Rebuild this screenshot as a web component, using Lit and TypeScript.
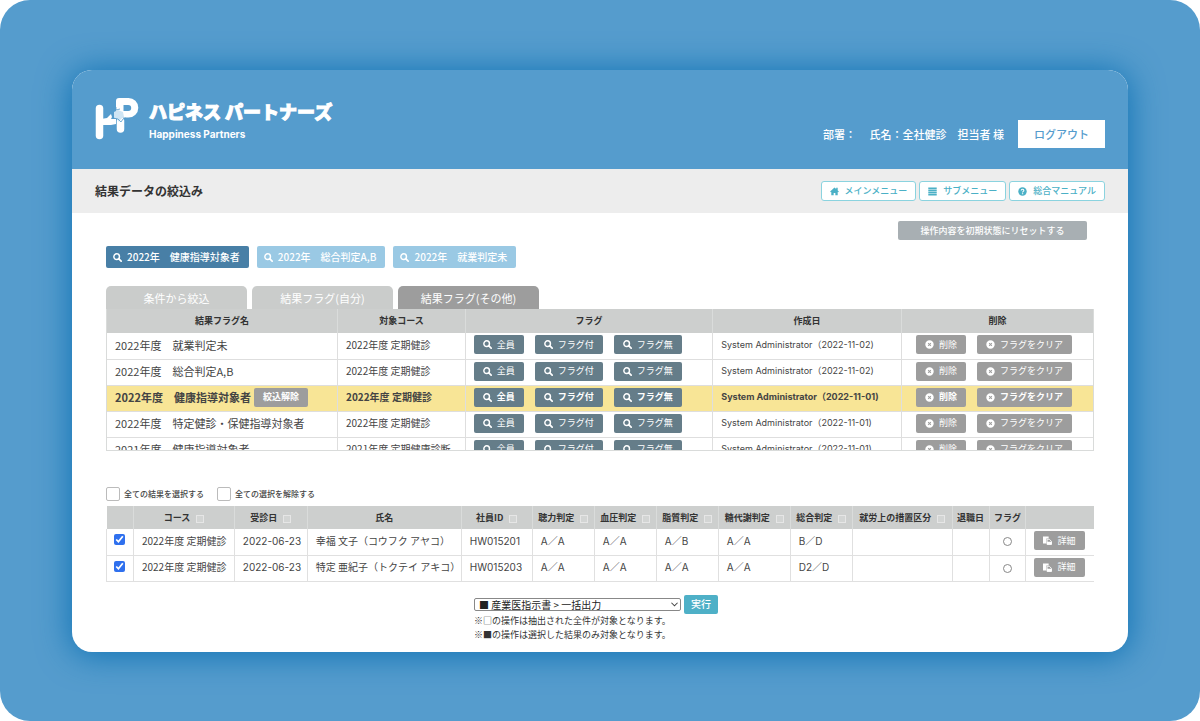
import { LitElement, html, css, svg } from "lit";
import { customElement } from "lit/decorators.js";
import { classMap } from "lit/directives/class-map.js";

const icon = (name: string) => {
  const shapes: Record<string, unknown> = {
    search: svg`<circle cx="6.5" cy="6.5" r="5" fill="none" stroke="currentColor" stroke-width="2.6"/><path d="M10.500 10.500l4 4" stroke="currentColor" stroke-width="3" stroke-linecap="round"/>`,
    home: svg`<path fill="currentColor" d="M8 1l7.800 7-1.300 1.400L13.700 8.700V14.800H9.500V10.500H6.500v4.300H2.300V8.700L1.500 9.400.2 8zM11 1.500h2.700v4.500L11 3.500z"/>`,
    list: svg`<path fill="currentColor" d="M.5 1h15v2.800H.5zM.5 4.700h15v2.800H.5zM.5 8.400h15v2.800H.5zM.5 12.100h15v2.800H.5z"/>`,
    help: svg`<circle cx="8" cy="8" r="7.500" fill="currentColor"/><path d="M5.700 6.200c0-3.200 4.700-3 4.700-.2 0 1.800-2.300 1.600-2.300 3.600" fill="none" stroke="#fff" stroke-width="1.900"/><path fill="#fff" d="M7 10.900h2.200v2H7z"/>`,
    close: svg`<path fill="currentColor" fill-rule="evenodd" d="M8 .5a7.500 7.500 0 1 0 0 15 7.500 7.500 0 0 0 0-15zM6.100 4.900L8 6.800l1.900-1.900 1.200 1.200L9.200 8l1.900 1.900-1.200 1.200L8 9.200l-1.900 1.900-1.200-1.200L6.800 8 4.900 6.100z"/>`,
    paste: svg`<path fill="currentColor" d="M0 1h10v3.500H6v9H0z"/><path fill="none" stroke="currentColor" stroke-width="1.600" d="M7.300 5.800h4l3.700 3.700v5.500H7.300z"/><path fill="currentColor" d="M7 10h8.500v5H7z"/>`,
  };
  return html`<svg class="icon" viewBox="0 0 16 16" aria-hidden="true">${shapes[name]}</svg>`;
};

interface FlagRow {
  name: string;
  course: string;
  created: string;
  active?: boolean;
}

const FLAGS: FlagRow[] = [
  { name: "2022年度　就業判定未", course: "2022年度 定期健診", created: "2022-11-02" },
  { name: "2022年度　総合判定A,B", course: "2022年度 定期健診", created: "2022-11-02" },
  { name: "2022年度　健康指導対象者", course: "2022年度 定期健診", created: "2022-11-01", active: true },
  { name: "2022年度　特定健診・保健指導対象者", course: "2022年度 定期健診", created: "2022-11-01" },
  { name: "2021年度　健康指導対象者", course: "2021年度 定期健康診断", created: "2022-11-01" },
];

const COLUMNS = [
  { label: "", width: 27 },
  { label: "コース", width: 101, sort: true },
  { label: "受診日", width: 73, sort: true },
  { label: "氏名", width: 154 },
  { label: "社員ID", width: 71, sort: true },
  { label: "聴力判定", width: 62, sort: true },
  { label: "血圧判定", width: 62, sort: true },
  { label: "脂質判定", width: 62, sort: true },
  { label: "糖代謝判定", width: 72, sort: true },
  { label: "総合判定", width: 62, sort: true },
  { label: "就労上の措置区分", width: 100, sort: true },
  { label: "退職日", width: 37 },
  { label: "フラグ", width: 37 },
  { label: "", width: 68 },
];

const PEOPLE = [
  { name: "幸福 文子（コウフク アヤコ）", id: "HW015201", results: ["A／A", "A／A", "A／B", "A／A", "B／D"] },
  { name: "特定 亜紀子（トクテイ アキコ）", id: "HW015203", results: ["A／A", "A／A", "A／A", "A／A", "D2／D"] },
];

@customElement("app-root")
export class AppRoot extends LitElement {
  static styles = css`
    :host {
      display: block;
      background: #fff;
      color: #444;
      font: 10px/14px "Noto Sans CJK JP", sans-serif;
    }
    * { box-sizing: border-box; }
    button, select, input { font: inherit; margin: 0; }
    button { border: 0; padding: 0; cursor: pointer; white-space: nowrap; }
    h1, h2, p { margin: 0; }
    .stage { min-height: 100vh; padding: 70px 6% 69px; border-radius: 30px; background: #559ccd; display: flex; flex-direction: column; }
    .panel { flex: 1; border-radius: 20px; overflow: hidden; background: #fff; }
    .shadow { flex: 1; display: flex; flex-direction: column; border-radius: 20px; box-shadow: 0 2px 32px 2px #1274b5; }
    .head { display: flex; justify-content: space-between; height: 99px; padding: 0 23px; background: #559ccd; color: #fff; }
    .brand { display: flex; gap: 10px; padding-top: 27px; }
    .logo { width: 44px; height: 44px; }
    .brandname { font-size: 18px; line-height: 28px; font-weight: 900; -webkit-text-stroke: 1px #fff; }
    .tagline { font: 700 10px/18px Inter, sans-serif; }
    .user { display: flex; align-items: center; align-self: flex-start; gap: 14px; padding-top: 50px; font-size: 11px; font-weight: 500; white-space: pre; }
    .logout { width: 87px; height: 28px; background: #fff; color: #559ccd; font-weight: 500; }
    .bar { display: flex; align-items: center; justify-content: space-between; height: 44px; padding: 0 23px; background: #ededed; }
    .title { font-size: 12px; font-weight: 700; color: #333; }
    .nav { display: flex; gap: 3px; }
    .nav a { display: flex; align-items: center; gap: 6px; height: 20px; padding: 0 8px; border: 1px solid #8bd3df; border-radius: 3px; background: #fff; color: #4bb0c6; font-size: 9px; font-weight: 500; text-decoration: none; white-space: nowrap; }
    .icon { width: 9px; height: 9px; flex: none; display: block; }
    .body { padding: 8px 34px 6px; }
    .resetline { display: flex; justify-content: flex-end; padding-right: 7px; }
    .reset { width: 189px; height: 19px; border-radius: 2px; background: #a8afb3; color: #fff; font-size: 9px; font-weight: 500; }
    .saved { display: flex; gap: 8px; margin-top: 6px; }
    .saved button { display: flex; align-items: center; gap: 5px; height: 22px; padding: 0 9px 0 7px; border-radius: 2px; background: #9ac9e4; color: #fff; font-weight: 500; }
    .saved .on { background: #487fa6; }
    .tabs { display: flex; gap: 5px; margin-top: 18px; }
    .tabs button { width: 141px; height: 23px; border-radius: 5px 5px 0 0; background: #cacccb; color: #fff; font-size: 11px; }
    .tabs .on { background: #9d9d9d; }
    .scroll { height: 142px; overflow: hidden; border: 1px solid #d9dbda; border-top: 0; }
    table { width: 100%; border-collapse: collapse; table-layout: fixed; }
    th { height: 24px; padding: 0; background: #cdcfce; color: #333; font-size: 9px; font-weight: 700; white-space: nowrap; border-left: 1px solid #dadcdb; }
    td { height: 26px; padding: 0 0 2px 8px; border-left: 1px solid #dedede; border-bottom: 1px solid #dedede; white-space: nowrap; }
    th:first-child, td:first-child { border-left: 0; }
    .name { font-size: 11px; }
    .inner { display: flex; align-items: center; gap: 3px; }
    .created { font: 9px/14px Inter, "Noto Sans CJK JP", sans-serif; }
    .latin { font-family: Inter, "Noto Sans CJK JP", sans-serif; }
    .active td { background: #f8e596; font-weight: 700; }
    .ops { display: flex; gap: 11px; }
    .del { padding-left: 6px; }
    .small { display: flex; align-items: center; justify-content: center; gap: 5px; height: 19px; border-radius: 2px; background: #9d9d9d; color: #fff; font-size: 9px; font-weight: inherit; padding: 0 9px; }
    .slate { background: #657d89; }
    .picks { display: flex; gap: 13px; margin-top: 36px; }
    .picks label { display: flex; align-items: center; gap: 4px; font-size: 8px; font-weight: 500; }
    .box { appearance: none; width: 14px; height: 14px; border: 1px solid #bbb; border-radius: 2px; background: #fff; }
    .people { margin-top: 5px; }
    .people th { height: 23px; }
    .people td { border-color: #e0e0e0; }
    .people td:first-child { border-left: 1px solid #e0e0e0; }
    .sort { display: inline-block; width: 8px; height: 8px; margin-left: 6px; border: 1px solid #e6e6e6; background: #d3d5d4; vertical-align: -1px; padding: 0; }
    .people .tick { padding: 0 0 4px; text-align: center; }
    .tick input { display: block; width: 11px; height: 11px; margin: 0 auto; accent-color: #2f70ee; }
    .people .mark { padding: 0; text-align: center; }
    .ring { display: block; width: 9px; height: 9px; margin: 0 auto; border: 1px solid #888; border-radius: 50%; }
    .run { display: flex; flex-direction: column; width: 252px; margin: 13px auto 0; }
    .runline { display: flex; align-items: center; gap: 3px; }
    .pick { appearance: none; width: 100%; height: 13px; padding: 0 4px; border: 1px solid #888; border-radius: 2px; background: #fff; color: #222; line-height: 11px; }
    .pickwrap { display: grid; width: 207px; align-items: center; }
    .pick, .chev { grid-area: 1 / 1; }
    .chev { justify-self: end; width: 7px; height: 7px; margin-right: 3px; pointer-events: none; }
    .exec { width: 34px; height: 19px; border-radius: 2px; background: #4eb0c7; color: #fff; font-weight: 500; }
    .notes { font-size: 9px; white-space: nowrap; color: #333; }
  `;

  private flagButton(label: string, glyph: string, slate = false) {
    return html`<button class=${classMap({ small: true, slate })}>${icon(glyph)}<span>${label}</span></button>`;
  }

  private flagRow(row: FlagRow) {
    return html`<tr class=${classMap({ active: !!row.active })}>
      <td class="name"><div class="inner"><span>${row.name}</span>${row.active ? html`<button class="small">絞込解除</button>` : ""}</div></td>
      <td>${row.course}</td>
      <td><div class="ops">${this.flagButton("全員", "search", true)}${this.flagButton("フラグ付", "search", true)}${this.flagButton("フラグ無", "search", true)}</div></td>
      <td class="created">System Administrator（${row.created})</td>
      <td><div class="ops del">${this.flagButton("削除", "close")}${this.flagButton("フラグをクリア", "close")}</div></td>
    </tr>`;
  }

  render() {
    return html`<div class="stage"><div class="shadow"><main class="panel">
      <header class="head">
        <div class="brand">
          <svg class="logo" viewBox="0 0 44 44" aria-hidden="true">
            <g fill="none" stroke="#fff" stroke-width="7.500" stroke-linecap="round" stroke-linejoin="round">
              <path d="M4.500 11.500v27"/><path d="M25.500 32V24"/>
            </g>
            <path fill="#fff" fill-rule="evenodd" d="M24 1h9.500a9.800 9.800 0 0 1 0 19.600H21V4a3 3 0 0 1 3-3zM28.500 8v6h4.700a3 3 0 0 0 0-6z"/>
            <path fill="#fff" d="M6 22l6-1 4-4 1 3-1 2h5v5l-5 1H6z"/>
            <path fill="#cfe5f4" d="M19 15l4-2 5 2 1 5-3 2-2 3-2-3-3-1z"/>
            <path fill="none" stroke="#559ccd" stroke-width=".8" d="M18 21l5 1 3 3 2-3 3-1M21 10v3l4-1"/>
          </svg>
          <div><h1 class="brandname">ハピネス パートナーズ</h1><p class="tagline">Happiness Partners</p></div>
        </div>
        <div class="user"><span>部署：　 氏名：全社健診　担当者 様</span><button class="logout">ログアウト</button></div>
      </header>
      <div class="bar">
        <h2 class="title">結果データの絞込み</h2>
        <nav class="nav"><a href="#main">${icon("home")}メインメニュー</a><a href="#sub">${icon("list")}サブメニュー</a><a href="#manual">${icon("help")}総合マニュアル</a></nav>
      </div>
      <div class="body">
        <div class="resetline"><button class="reset">操作内容を初期状態にリセットする</button></div>
        <div class="saved">
          <button class="on">${icon("search")}<span>2022年　健康指導対象者</span></button>
          <button>${icon("search")}<span>2022年　総合判定A,B</span></button>
          <button>${icon("search")}<span>2022年　就業判定未</span></button>
        </div>
        <div class="tabs"><button>条件から絞込</button><button>結果フラグ(自分)</button><button class="on">結果フラグ(その他)</button></div>
        <div class="scroll"><table>
          <colgroup>${[231, 128, 248, 189, 192].map((w) => html`<col style="width:${(w / 9.88).toFixed(2)}%">`)}</colgroup>
          <thead><tr>${["結果フラグ名", "対象コース", "フラグ", "作成日", "削除"].map((t) => html`<th>${t}</th>`)}</tr></thead>
          <tbody>${FLAGS.map((r) => this.flagRow(r))}</tbody>
        </table></div>
        <div class="picks">
          <label><input class="box" type="checkbox">全ての結果を選択する</label>
          <label><input class="box" type="checkbox">全ての選択を解除する</label>
        </div>
        <table class="people">
          <colgroup>${COLUMNS.map((c) => html`<col style="width:${(c.width / 9.88).toFixed(2)}%">`)}</colgroup>
          <thead><tr>${COLUMNS.map((c) => html`<th>${c.label}${c.sort ? html`<button class="sort" aria-label="並べ替え"></button>` : ""}</th>`)}</tr></thead>
          <tbody>${PEOPLE.map((p) => html`<tr>
            <td class="tick"><input type="checkbox" checked aria-label=${p.name}></td>
            <td>2022年度 定期健診</td><td class="latin">2022-06-23</td><td>${p.name}</td><td class="latin">${p.id}</td>
            ${p.results.map((r) => html`<td class="latin">${r}</td>`)}
            <td></td><td></td><td class="mark"><span class="ring"></span></td>
            <td><div class="ops">${this.flagButton("詳細", "paste")}</div></td>
          </tr>`)}</tbody>
        </table>
        <div class="run">
          <div class="runline">
            <div class="pickwrap"><select class="pick" aria-label="操作"><option>■ 産業医指示書 &gt; 一括出力</option></select>
              <svg class="chev" viewBox="0 0 8 8" aria-hidden="true"><path d="M.5 2l3.500 3.500L7.500 2" fill="none" stroke="#444" stroke-width="1.200"/></svg></div>
            <button class="exec">実行</button>
          </div>
          <div class="notes"><p>※□の操作は抽出された全件が対象となります。</p><p>※■の操作は選択した結果のみ対象となります。</p></div>
        </div>
      </div>
    </main></div></div>`;
  }
}
